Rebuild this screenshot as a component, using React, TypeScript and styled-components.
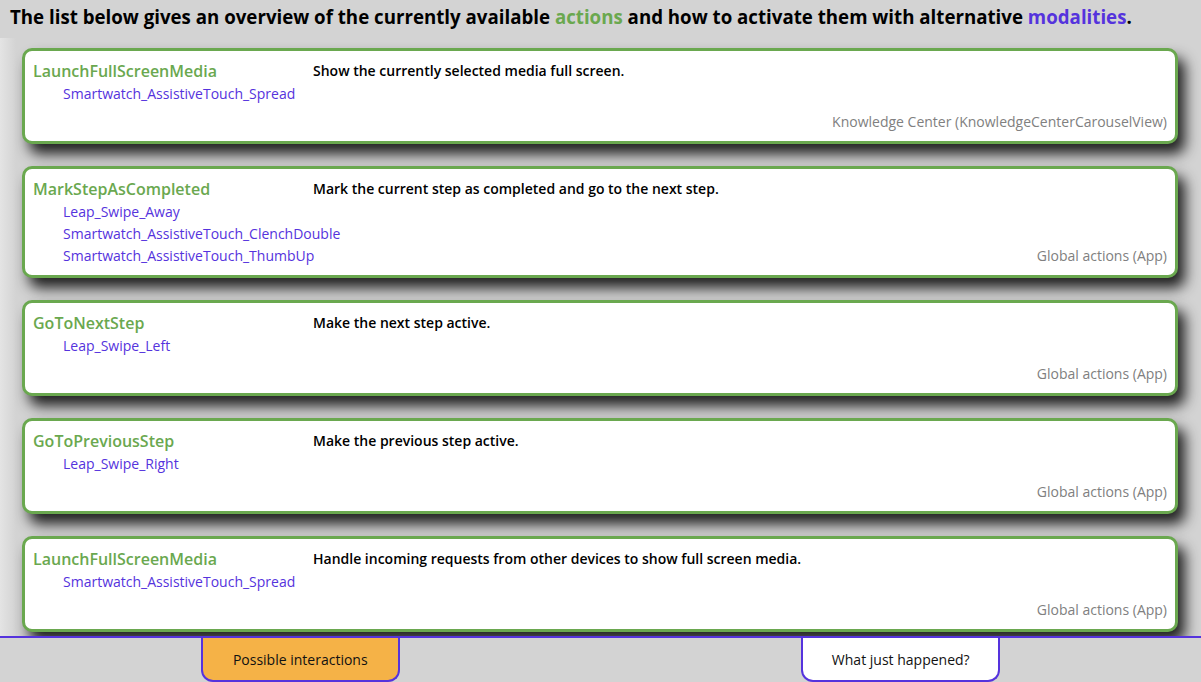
import React from "react";
import styled, { createGlobalStyle } from "styled-components";

const GREEN = "#6aa84f";
const PURPLE = "#5533dd";

const GlobalStyle = createGlobalStyle`
  html, body {
    margin: 0;
    padding: 0;
    background: #d3d3d3;
    font-family: "Open Sans", "Noto Sans", sans-serif;
  }
`;

interface Action {
  name: string;
  modalities: string[];
  description: string;
  context: string;
}

const actions: Action[] = [
  {
    name: "LaunchFullScreenMedia",
    modalities: ["Smartwatch_AssistiveTouch_Spread"],
    description: "Show the currently selected media full screen.",
    context: "Knowledge Center (KnowledgeCenterCarouselView)",
  },
  {
    name: "MarkStepAsCompleted",
    modalities: [
      "Leap_Swipe_Away",
      "Smartwatch_AssistiveTouch_ClenchDouble",
      "Smartwatch_AssistiveTouch_ThumbUp",
    ],
    description: "Mark the current step as completed and go to the next step.",
    context: "Global actions (App)",
  },
  {
    name: "GoToNextStep",
    modalities: ["Leap_Swipe_Left"],
    description: "Make the next step active.",
    context: "Global actions (App)",
  },
  {
    name: "GoToPreviousStep",
    modalities: ["Leap_Swipe_Right"],
    description: "Make the previous step active.",
    context: "Global actions (App)",
  },
  {
    name: "LaunchFullScreenMedia",
    modalities: ["Smartwatch_AssistiveTouch_Spread"],
    description:
      "Handle incoming requests from other devices to show full screen media.",
    context: "Global actions (App)",
  },
];

const Page = styled.div`
  width: 1201px;
  height: 682px;
  display: flex;
  flex-direction: column;
  overflow: hidden;
`;

const Heading = styled.h1`
  margin: 0;
  height: 38px;
  padding: 4px 0 0 10px;
  box-sizing: border-box;
  font-size: 18.7px;
  font-weight: 700;
  color: #000;
  white-space: nowrap;
`;

const Accent = styled.span<{ color: string }>`
  color: ${({ color }) => color};
`;

const List = styled.div`
  flex: 1;
  display: flex;
  flex-direction: column;
  gap: 22px;
  padding: 10px 23px 0 22px;
  background: linear-gradient(to right, #e4e4e4 0, #d3d3d3 16px);
  overflow: hidden;
`;

const Card = styled.div`
  display: grid;
  grid-template-columns: 280px 1fr;
  min-height: 96px;
  box-sizing: border-box;
  padding: 9px 8px 8px 8px;
  background: #fff;
  border: 3px solid ${GREEN};
  border-radius: 10px;
  box-shadow: 7px 10px 14px rgba(0, 0, 0, 0.85);
  flex-shrink: 0;
`;

const NameColumn = styled.div`
  display: flex;
  flex-direction: column;
`;

const ActionName = styled.div`
  font-size: 16px;
  font-weight: 600;
  line-height: 22px;
  color: ${GREEN};
`;

const Modalities = styled.div`
  padding: 1px 0 0 30px;
`;

const Modality = styled.div`
  font-size: 14px;
  line-height: 22px;
  color: ${PURPLE};
`;

const InfoColumn = styled.div`
  display: flex;
  flex-direction: column;
  justify-content: space-between;
`;

const Description = styled.div`
  font-size: 14px;
  font-weight: 600;
  line-height: 22px;
  color: #000;
`;

const Context = styled.div`
  text-align: right;
  font-size: 14px;
  line-height: 22px;
  color: #808080;
`;

const Footer = styled.div`
  height: 44px;
  flex-shrink: 0;
  display: grid;
  grid-template-columns: 1fr 1fr;
  border-top: 2px solid ${PURPLE};
`;

const TabSlot = styled.div`
  display: flex;
  justify-content: center;
`;

const Tab = styled.div<{ active?: boolean }>`
  width: 199px;
  height: 44px;
  box-sizing: border-box;
  display: flex;
  align-items: center;
  justify-content: center;
  border: 2px solid ${PURPLE};
  border-top: none;
  border-radius: 0 0 12px 12px;
  background: ${({ active }) => (active ? "#f5b247" : "#fff")};
  font-size: 14px;
  color: #111;
`;

export default function App(): JSX.Element {
  return (
    <Page>
      <GlobalStyle />
      <Heading>
        The list below gives an overview of the currently available{" "}
        <Accent color={GREEN}>actions</Accent> and how to activate them with
        alternative <Accent color={PURPLE}>modalities</Accent>.
      </Heading>
      <List>
        {actions.map((action, i) => (
          <Card key={i}>
            <NameColumn>
              <ActionName>{action.name}</ActionName>
              <Modalities>
                {action.modalities.map((m) => (
                  <Modality key={m}>{m}</Modality>
                ))}
              </Modalities>
            </NameColumn>
            <InfoColumn>
              <Description>{action.description}</Description>
              <Context>{action.context}</Context>
            </InfoColumn>
          </Card>
        ))}
      </List>
      <Footer>
        <TabSlot>
          <Tab active>Possible interactions</Tab>
        </TabSlot>
        <TabSlot>
          <Tab>What just happened?</Tab>
        </TabSlot>
      </Footer>
    </Page>
  );
}
